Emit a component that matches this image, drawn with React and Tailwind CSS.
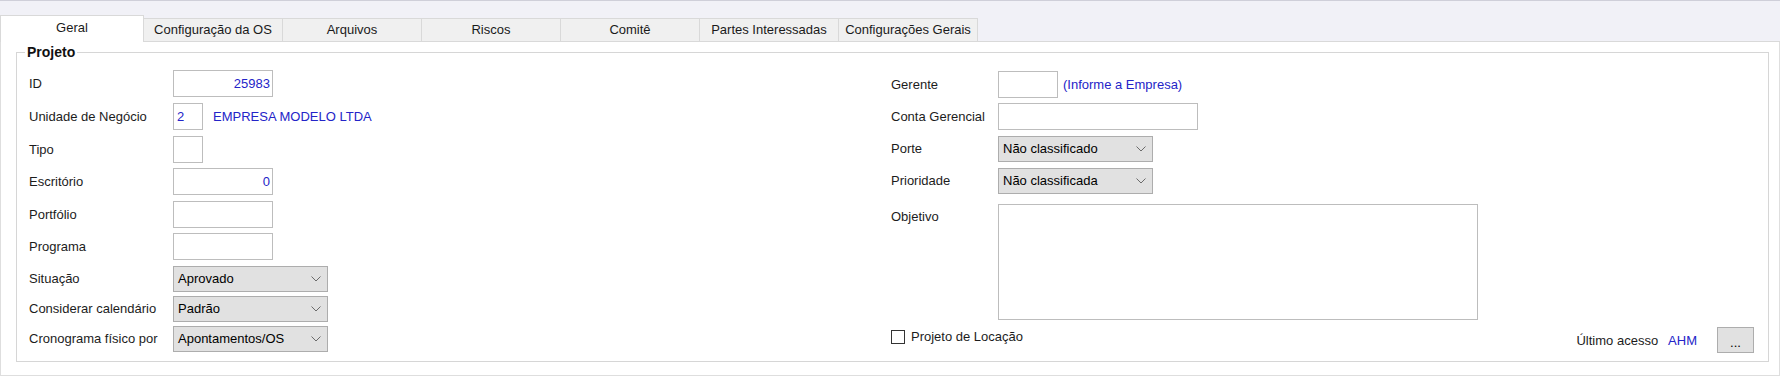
import React from "react";

const Chevron = () => (
  <svg width="10" height="6" viewBox="0 0 10 6" className="shrink-0">
    <path d="M0.5 0.5 L5 5 L9.5 0.5" fill="none" stroke="#6b6b6b" strokeWidth="1" />
  </svg>
);

const Box = ({ w, children, align = "left", blue = false }) => (
  <div
    className={`h-[27px] border border-[#bdbdbd] bg-white flex items-center shrink-0 ${
      align === "right" ? "justify-end pr-[2px]" : "pl-[3px]"
    } ${blue ? "text-[#2424c8]" : "text-black"}`}
    style={{ width: w }}
  >
    {children}
  </div>
);

const Select = ({ w = 155, value }) => (
  <div
    className="h-[26px] border border-[#adadad] bg-[#e1e1e1] flex items-center justify-between pl-[4px] pr-[6px] text-black shrink-0"
    style={{ width: w }}
  >
    <span>{value}</span>
    <Chevron />
  </div>
);

const LRow = ({ label, children, mt }) => (
  <div className={`flex items-center ${mt}`}>
    <div className="w-[144px] shrink-0 text-[#1c1c1c]">{label}</div>
    {children}
  </div>
);

const RRow = ({ label, children, mt }) => (
  <div className={`flex items-center ${mt}`}>
    <div className="w-[107px] shrink-0 text-[#1c1c1c]">{label}</div>
    {children}
  </div>
);

const tabs = [
  "Configuração da OS",
  "Arquivos",
  "Riscos",
  "Comitê",
  "Partes Interessadas",
  "Configurações Gerais",
];

export default function App() {
  return (
    <div className="w-[1780px] h-[376px] bg-[#f1f1f7] border-t border-[#cfcfd9] font-['Liberation_Sans',Arial,sans-serif] text-[13px] leading-[16px] overflow-hidden">
      {/* Tab bar */}
      <div className="flex items-end h-[41px] border-b border-[#d9d9d9]">
        <div className="-mb-px w-[144px] h-[27px] bg-white border-l border-r border-t border-[#d9d9d9] flex justify-center pt-[4px] text-[#1a1a1a]">
          Geral
        </div>
        {tabs.map((t) => (
          <div
            key={t}
            className="-mb-px w-[139px] h-[24px] bg-[#f0f0f0] border-r border-t border-b border-[#d9d9d9] flex justify-center items-center text-[#1a1a1a] whitespace-nowrap"
          >
            {t}
          </div>
        ))}
      </div>

      {/* Panel */}
      <div className="h-[334px] bg-white border-l border-r border-b border-[#dedede] pt-px">
        <fieldset className="ml-[15px] mr-[10px] h-[319px] border border-[#d6d6d6] pl-[12px] pr-[14px]">
          <legend className="-ml-[4px] px-[2px] font-bold text-[14px] text-[#111] leading-[18px]">Projeto</legend>
          <div className="flex pt-[9px]">
            {/* Left column */}
            <div className="w-[862px] shrink-0 flex flex-col">
              <LRow label="ID" mt="mt-0">
                <Box w={100} align="right" blue>25983</Box>
              </LRow>
              <LRow label="Unidade de Negócio" mt="mt-[6px]">
                <Box w={30} blue>2</Box>
                <span className="ml-[10px] text-[#2424c8]">EMPRESA MODELO LTDA</span>
              </LRow>
              <LRow label="Tipo" mt="mt-[6px]">
                <Box w={30} />
              </LRow>
              <LRow label="Escritório" mt="mt-[5px]">
                <Box w={100} align="right" blue>0</Box>
              </LRow>
              <LRow label="Portfólio" mt="mt-[6px]">
                <Box w={100} />
              </LRow>
              <LRow label="Programa" mt="mt-[5px]">
                <Box w={100} />
              </LRow>
              <LRow label="Situação" mt="mt-[6px]">
                <Select value="Aprovado" />
              </LRow>
              <LRow label="Considerar calendário" mt="mt-[4px]">
                <Select value="Padrão" />
              </LRow>
              <LRow label="Cronograma físico por" mt="mt-[4px]">
                <Select value="Apontamentos/OS" />
              </LRow>
            </div>

            {/* Right column */}
            <div className="flex-1 flex flex-col">
              <RRow label="Gerente" mt="mt-[1px]">
                <Box w={60} />
                <span className="ml-[5px] text-[#2424c8]">(Informe a Empresa)</span>
              </RRow>
              <RRow label="Conta Gerencial" mt="mt-[5px]">
                <Box w={200} />
              </RRow>
              <RRow label="Porte" mt="mt-[6px]">
                <Select value="Não classificado" />
              </RRow>
              <RRow label="Prioridade" mt="mt-[6px]">
                <Select value="Não classificada" />
              </RRow>
              <div className="flex mt-[10px]">
                <div className="w-[107px] shrink-0 text-[#1c1c1c] pt-[5px]">Objetivo</div>
                <div className="w-[480px] h-[116px] border border-[#bdbdbd] bg-white" />
              </div>
              <div className="flex justify-between items-start mt-[7px] h-[26px]">
                <div className="flex items-center mt-[2px]">
                  <div className="w-[14px] h-[14px] border border-[#333] bg-white" />
                  <span className="ml-[6px] text-[#1c1c1c]">Projeto de Locação</span>
                </div>
                <div className="flex items-center h-[26px]">
                  <span className="text-[#1c1c1c] mt-[2px]">Último acesso</span>
                  <span className="ml-[10px] text-[#2424c8] mt-[2px]">AHM</span>
                  <div className="ml-[20px] w-[37px] h-[26px] border border-[#adadad] bg-[#e1e1e1] flex justify-center items-end pb-[4px] text-black leading-[10px]">
                    ...
                  </div>
                </div>
              </div>
            </div>
          </div>
        </fieldset>
      </div>
    </div>
  );
}
